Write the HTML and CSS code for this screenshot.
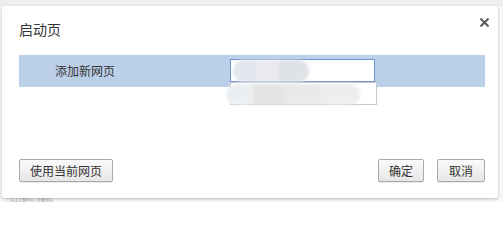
FILE: index.html
```html
<!DOCTYPE html>
<html lang="zh-CN">
<head>
<meta charset="utf-8">
<link rel="stylesheet" href="styles.css">
</head>
<body>
<div class="page">
  <div class="topband"></div>
  <div class="dialog">
    <div class="close"><svg width="9" height="9" viewBox="0 0 9 9"><path d="M1.2 1.2 L7.8 7.8 M7.8 1.2 L1.2 7.8" stroke="#5a5a5a" stroke-width="2" stroke-linecap="square"/></svg></div>
    <div class="title">启动页</div>
    <div class="row">
      <div class="label">添加新网页</div>
      <div class="inputs">
        <div class="input focused"></div>
        <div class="input second"></div>
        <div class="blur b1"></div>
        <div class="blur b2"></div>
      </div>
    </div>
    <div class="footer">
      <button class="btn wide">使用当前网页</button>
      <div class="spacer"></div>
      <button class="btn ok">确定</button>
      <button class="btn cancel">取消</button>
    </div>
  </div>
  <div class="behind">二关注主题网站 | 收藏网站</div>
</div>
</body>
</html>
```
FILE: styles.css
```css
html, body {
  margin: 0;
  padding: 0;
  background: #ffffff;
  font-family: "Noto Sans CJK SC", "Noto Sans", sans-serif;
  overflow: hidden;
}
.page {
  width: 503px;
  height: 202px;
  position: relative;
  background: #f7f7f7;
  overflow: hidden;
}
.topband {
  height: 6px;
  background: #eeeeee;
}
.dialog {
  position: relative;
  margin-left: 2px;
  width: 496px;
  height: 192px;
  box-sizing: border-box;
  background: #ffffff;
  border-radius: 2px;
  box-shadow: 0 1px 3px rgba(0,0,0,0.25);
  padding: 0 13px 16px 17px;
  display: flex;
  flex-direction: column;
  z-index: 1;
}
.close {
  position: absolute;
  right: 9px;
  top: 12px;
  width: 9px;
  height: 9px;
  display: flex;
}
.title {
  margin-top: 13px;
  font-size: 14px;
  line-height: 20px;
  color: #333;
}
.row {
  margin-top: 16px;
  height: 32px;
  flex-shrink: 0;
  background: #bccfe9;
  display: flex;
  align-items: flex-start;
}
.label {
  width: 175px;
  padding-left: 36px;
  font-size: 12px;
  line-height: 32px;
  color: #333;
}
.inputs {
  position: relative;
  margin-top: 4px;
  display: flex;
  flex-direction: column;
}
.input {
  flex-shrink: 0;
  width: 145px;
  height: 23px;
  box-sizing: border-box;
  border: 1px solid #c8c8c8;
  background: #fff;
}
.input.focused {
  border-color: #6f94d6;
}
.input.second {
  width: 147px;
  height: 23px;
}
.blur {
  position: absolute;
  filter: blur(1.5px);
}
.b1 {
  left: 3px;
  top: 1px;
  width: 76px;
  height: 22px;
  border-radius: 11px;
  background: linear-gradient(90deg, #e2e7ee 0 30%, #e8eaee 30% 60%, #dfe2e6 60% 100%);
}
.b2 {
  left: -4px;
  top: 25px;
  width: 134px;
  height: 21px;
  border-radius: 10px;
  background: linear-gradient(90deg, #eceff2 0 20%, #e4e4e4 20% 45%, #e9e9e9 45% 70%, #eeeeee 70% 100%);
}
.footer {
  margin-top: auto;
  display: flex;
  align-items: center;
}
.spacer { flex: 1; }
.btn {
  height: 23px;
  box-sizing: border-box;
  padding: 0;
  font-family: "Noto Sans CJK SC", sans-serif;
  font-size: 12px;
  line-height: 20px;
  color: #333;
  border: 1px solid #a9a9a9;
  border-radius: 2px;
  background: linear-gradient(#fafafa, #e6e6e6);
  box-shadow: 0 1px 0 rgba(0,0,0,0.08);
}
.btn.wide { width: 94px; }
.btn.ok { width: 46px; margin-right: 13px; }
.btn.cancel { width: 48px; }
.behind {
  padding-left: 6px;
  font-size: 4px;
  line-height: 4px;
  color: #aaa;
}
```
